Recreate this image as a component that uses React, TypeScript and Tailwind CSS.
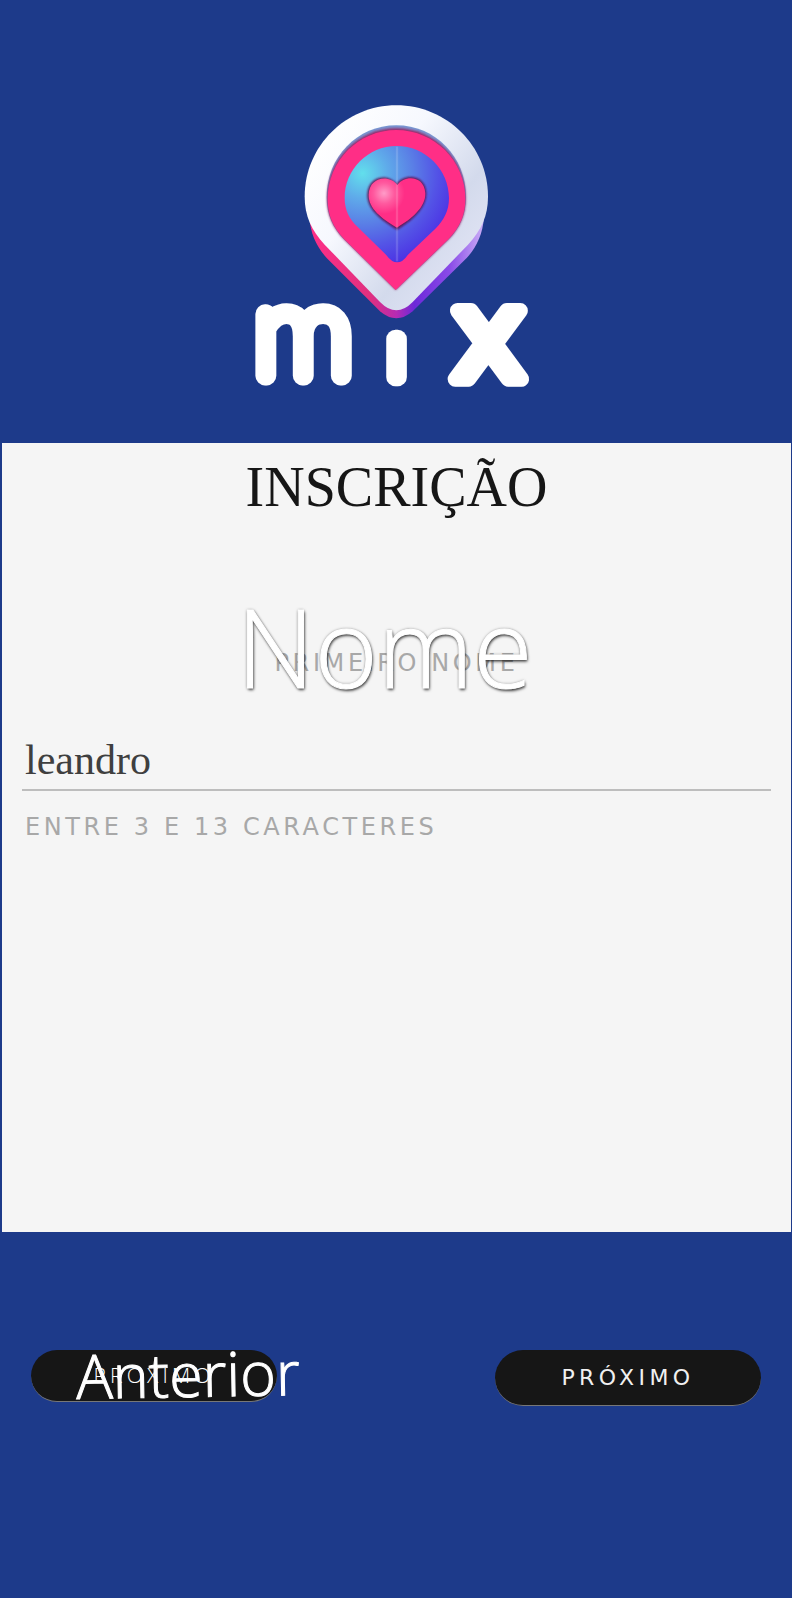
import React, { useState } from "react";

function Logo() {
  return (
    <svg viewBox="45 40 846 849" className="w-[282px] h-[283px] overflow-visible" role="img" aria-label="mix">
      <defs>
        <linearGradient id="ring" x1="0.1" y1="0.1" x2="0.85" y2="0.75">
          <stop offset="0" stopColor="#ffffff" />
          <stop offset="0.4" stopColor="#f6f8fe" />
          <stop offset="0.8" stopColor="#d3daec" />
          <stop offset="1" stopColor="#dde1f2" />
        </linearGradient>
        <linearGradient id="edge" x1="205" y1="0" x2="735" y2="0" gradientUnits="userSpaceOnUse">
          <stop offset="0" stopColor="#ff2f87" />
          <stop offset="0.35" stopColor="#e0307f" />
          <stop offset="0.5" stopColor="#b52bb4" />
          <stop offset="0.6" stopColor="#6c28d8" />
          <stop offset="0.8" stopColor="#8a4be8" />
          <stop offset="1" stopColor="#cdb2f7" />
        </linearGradient>
        <radialGradient id="orb" cx="368" cy="248" r="300" gradientUnits="userSpaceOnUse">
          <stop offset="0" stopColor="#62dfec" />
          <stop offset="0.25" stopColor="#5fabea" />
          <stop offset="0.5" stopColor="#5a80e6" />
          <stop offset="0.75" stopColor="#5352e6" />
          <stop offset="1" stopColor="#4a2ce4" />
        </radialGradient>
        <radialGradient id="heart" cx="432" cy="308" r="62" gradientUnits="userSpaceOnUse">
          <stop offset="0" stopColor="#ff9cc8" />
          <stop offset="0.5" stopColor="#ff5a9f" />
          <stop offset="1" stopColor="#ff2e86" />
        </radialGradient>
        <filter id="soft" x="-10%" y="-10%" width="120%" height="120%">
          <feGaussianBlur stdDeviation="3" />
        </filter>
      </defs>
      <path d="M208 380C212 430 228 466 260 502L420 662Q469 704 518 662L680 502C710 470 728 430 732 380Z" fill="url(#edge)" />
      <path d="M469 44C620 44 744 166 744 318C744 375 724 418 684 462L518 634Q469 684 420 634L254 462C214 418 194 375 194 318C194 166 318 44 469 44Z" fill="url(#ring)" />
      <path d="M469 104C586 104 678 200 678 318C678 372 660 410 626 446L467 598L312 446C278 410 260 372 260 318C260 200 352 104 469 104Z" fill="#7897d2" />
      <path d="M469 113C584 113 677 206 677 324C677 374 660 410 626 446L467 598L312 446C278 410 261 374 261 324C261 206 354 113 469 113Z" fill="#972969" filter="url(#soft)" />
      <path d="M469 118C582 118 676 210 676 325C676 374 659 410 625 446L467 598L313 446C279 410 263 374 263 325C263 210 356 118 469 118Z" fill="#ff2e86" />
      <path d="M470 166C556 166 627 236 627 322C627 360 612 388 586 414L504 492Q472 538 438 492L354 410C328 386 314 358 314 322C314 236 384 166 470 166Z" fill="url(#orb)" />
      <path d="M470 280C448 248 384 252 382 312C381 356 424 388 471 417C520 388 560 350 559 306C556 250 492 248 470 280Z" fill="#5d1255" filter="url(#soft)" />
      <path d="M472 283C450 252 388 256 386 312C385 354 426 384 471 411C516 384 557 350 556 308C553 254 494 252 472 283Z" fill="url(#heart)" />
      <path d="M471 168V512" stroke="#ffffff" strokeOpacity="0.15" strokeWidth="7" />
      <g fill="#ffffff" stroke="#ffffff" strokeLinejoin="round" strokeLinecap="round">
        <text x="190" y="856" textAnchor="middle" fontFamily="Lato, sans-serif" fontWeight="100" fontSize="378" strokeWidth="58">m</text>
        <text x="469" y="858" textAnchor="middle" fontFamily="Roboto, sans-serif" fontWeight="100" fontSize="216" strokeWidth="56">ı</text>
        <text x="746" y="864" textAnchor="middle" fontFamily="'DejaVu Sans', sans-serif" fontWeight="400" fontSize="374" strokeWidth="46">x</text>
      </g>
    </svg>
  );
}

export default function App() {
  const [name, setName] = useState("leandro");

  return (
    <main className="bg-[#1d3a8a] font-['Open_Sans',sans-serif]">
      <header className="flex justify-center pt-26 pb-14">
        <Logo />
      </header>

      <section className="ml-0.5 mr-px aspect-square bg-[#f5f5f5] px-5 pt-3">
        <h1 className="text-center font-['Liberation_Serif',serif] text-[56px] leading-16 text-[#161616]">
          INSCRIÇÃO
        </h1>

        <div className="mt-14 grid items-center justify-items-center">
          <p className="col-start-1 row-start-1 pt-8 font-['DejaVu_Sans',sans-serif] text-2xl leading-8 tracking-[0.15em] text-[#a8a8a8]">
            PRIMEIRO NOME
          </p>
          <label
            htmlFor="first-name"
            className="col-start-1 row-start-1 pr-6 text-[108px] leading-[144px] font-light text-white [-webkit-text-stroke:1px_white] [text-shadow:0_0_3px_rgba(0,0,0,0.5),1px_2px_3px_rgba(0,0,0,0.7)]"
          >
            Nome
          </label>
        </div>

        <input
          id="first-name"
          type="text"
          minLength={3}
          maxLength={13}
          aria-describedby="first-name-hint"
          value={name}
          onChange={(e) => setName(e.target.value)}
          className="mt-2 block h-16 w-full border-b-2 border-[#bdbdbd] bg-transparent px-[3px] pt-1 font-['Liberation_Serif',serif] text-[42px] text-[#3f3f3f] outline-none"
        />
        <p
          id="first-name-hint"
          className="mt-5 px-[3px] font-['DejaVu_Sans',sans-serif] text-2xl leading-8 tracking-[0.15em] text-[#a8a8a8]"
        >
          ENTRE 3 E 13 CARACTERES
        </p>
      </section>

      <footer className="flex items-start justify-between px-[31px] pt-[118px] pb-48">
        <button
          type="button"
          className="grid h-[52px] w-[246px] items-center justify-items-center rounded-full border-b border-[#777777] bg-[#161616] text-white"
        >
          <span className="col-start-1 row-start-1 text-[21px] font-light tracking-[0.2em]">PROXIMO</span>
          <span className="col-start-1 row-start-1 -mr-17 -rotate-1 pb-1 text-[61px] leading-12 font-light [-webkit-text-stroke:1px_white]">
            Anterior
          </span>
        </button>
        <button
          type="button"
          className="h-14 w-[266px] rounded-full border-b border-[#777777] bg-[#161616] font-['DejaVu_Sans',sans-serif] text-[22px] tracking-[0.2em] text-[#f0f0f0]"
        >
          PRÓXIMO
        </button>
      </footer>
    </main>
  );
}
